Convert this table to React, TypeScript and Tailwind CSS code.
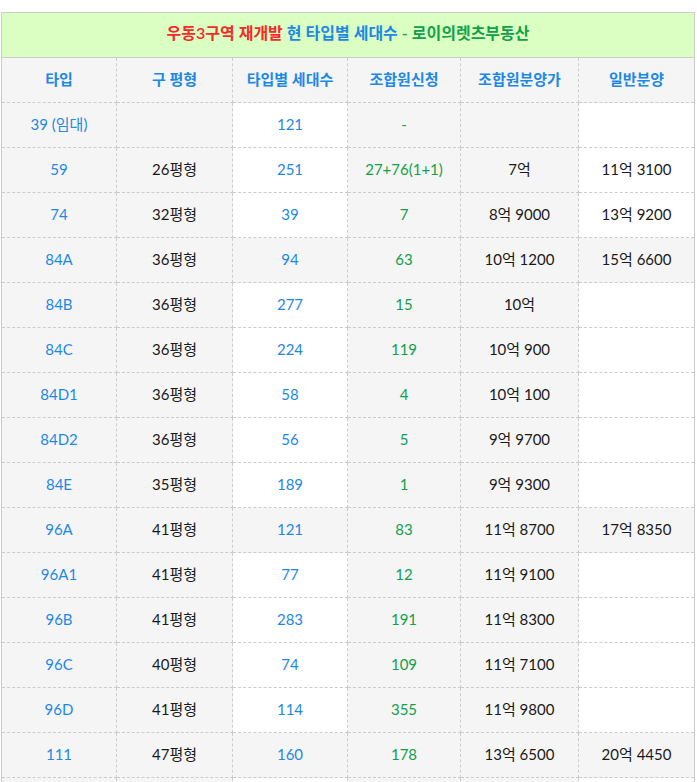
import React from 'react'

type Row = {
  type: string
  old: string
  count: string
  apply: string
  member: string
  general: string
  hl?: boolean
}

const rows: Row[] = [
  { type: '39 (임대)', old: '', count: '121', apply: '-', member: '', general: '' },
  { type: '59', old: '26평형', count: '251', apply: '27+76(1+1)', member: '7억', general: '11억 3100' },
  { type: '74', old: '32평형', count: '39', apply: '7', member: '8억 9000', general: '13억 9200' },
  { type: '84A', old: '36평형', count: '94', apply: '63', member: '10억 1200', general: '15억 6600', hl: true },
  { type: '84B', old: '36평형', count: '277', apply: '15', member: '10억', general: '' },
  { type: '84C', old: '36평형', count: '224', apply: '119', member: '10억 900', general: '' },
  { type: '84D1', old: '36평형', count: '58', apply: '4', member: '10억 100', general: '' },
  { type: '84D2', old: '36평형', count: '56', apply: '5', member: '9억 9700', general: '' },
  { type: '84E', old: '35평형', count: '189', apply: '1', member: '9억 9300', general: '' },
  { type: '96A', old: '41평형', count: '121', apply: '83', member: '11억 8700', general: '17억 8350', hl: true },
  { type: '96A1', old: '41평형', count: '77', apply: '12', member: '11억 9100', general: '' },
  { type: '96B', old: '41평형', count: '283', apply: '191', member: '11억 8300', general: '' },
  { type: '96C', old: '40평형', count: '74', apply: '109', member: '11억 7100', general: '' },
  { type: '96D', old: '41평형', count: '114', apply: '355', member: '11억 9800', general: '' },
  { type: '111', old: '47평형', count: '160', apply: '178', member: '13억 6500', general: '20억 4450', hl: true },
]

const headers = ['타입', '구 평형', '타입별 세대수', '조합원신청', '조합원분양가', '일반분양']

const cell = 'h-[45px] border border-dashed border-[#ccc] text-center align-middle p-0 pb-[2px]'

export default function App() {
  return (
    <div className="bg-white min-h-screen pt-3 pl-px" style={{ fontFamily: "Lato, 'Noto Sans CJK KR', sans-serif" }}>
      <table className="w-[693px] table-fixed border-collapse border border-solid border-[#ccc] text-[15px] text-[#1a1a1a]">
        <colgroup>
          <col className="w-[115px]" />
          <col className="w-[116px]" />
          <col className="w-[115px]" />
          <col className="w-[113px]" />
          <col className="w-[118px]" />
          <col className="w-[116px]" />
        </colgroup>
        <thead>
          <tr>
            <th colSpan={6} className="h-[45px] border border-solid border-[#ccc] bg-[#dbffc2] text-center text-[16px] font-semibold pb-[5px]">
              <span className="text-[#f52a2a]">우동3구역 재개발</span>{' '}
              <span className="text-[#1e88e5]">현 타입별 세대수</span>{' '}
              <span className="text-[#12a04a]">- 로이의렛츠부동산</span>
            </th>
          </tr>
          <tr className="bg-[#f5f5f5]">
            {headers.map(h => (
              <th key={h} className={`${cell} font-semibold text-[#1e88e5]`}>
                {h}
              </th>
            ))}
          </tr>
        </thead>
        <tbody>
          {rows.map(r => (
            <tr key={r.type}>
              <td className={`${cell} bg-[#f5f5f5] text-[#1e88e5]`}>{r.type}</td>
              <td className={`${cell} bg-[#f5f5f5]`}>{r.old}</td>
              <td className={`${cell} text-[#1e88e5] ${r.hl ? 'bg-[#f5f5f5]' : 'bg-white'}`}>{r.count}</td>
              <td className={`${cell} bg-[#f5f5f5] text-[#12a04a]`}>{r.apply}</td>
              <td className={`${cell} bg-[#f5f5f5]`}>{r.member}</td>
              <td className={`${cell} ${r.hl ? 'bg-[#f5f5f5]' : 'bg-white'}`}>{r.general}</td>
            </tr>
          ))}
          <tr>
            <td className={`${cell} bg-[#f5f5f5]`} />
            <td className={`${cell} bg-[#f5f5f5]`} />
            <td className={`${cell} bg-white`} />
            <td className={`${cell} bg-[#f5f5f5]`} />
            <td className={`${cell} bg-[#f5f5f5]`} />
            <td className={`${cell} bg-white`} />
          </tr>
        </tbody>
      </table>
    </div>
  )
}
